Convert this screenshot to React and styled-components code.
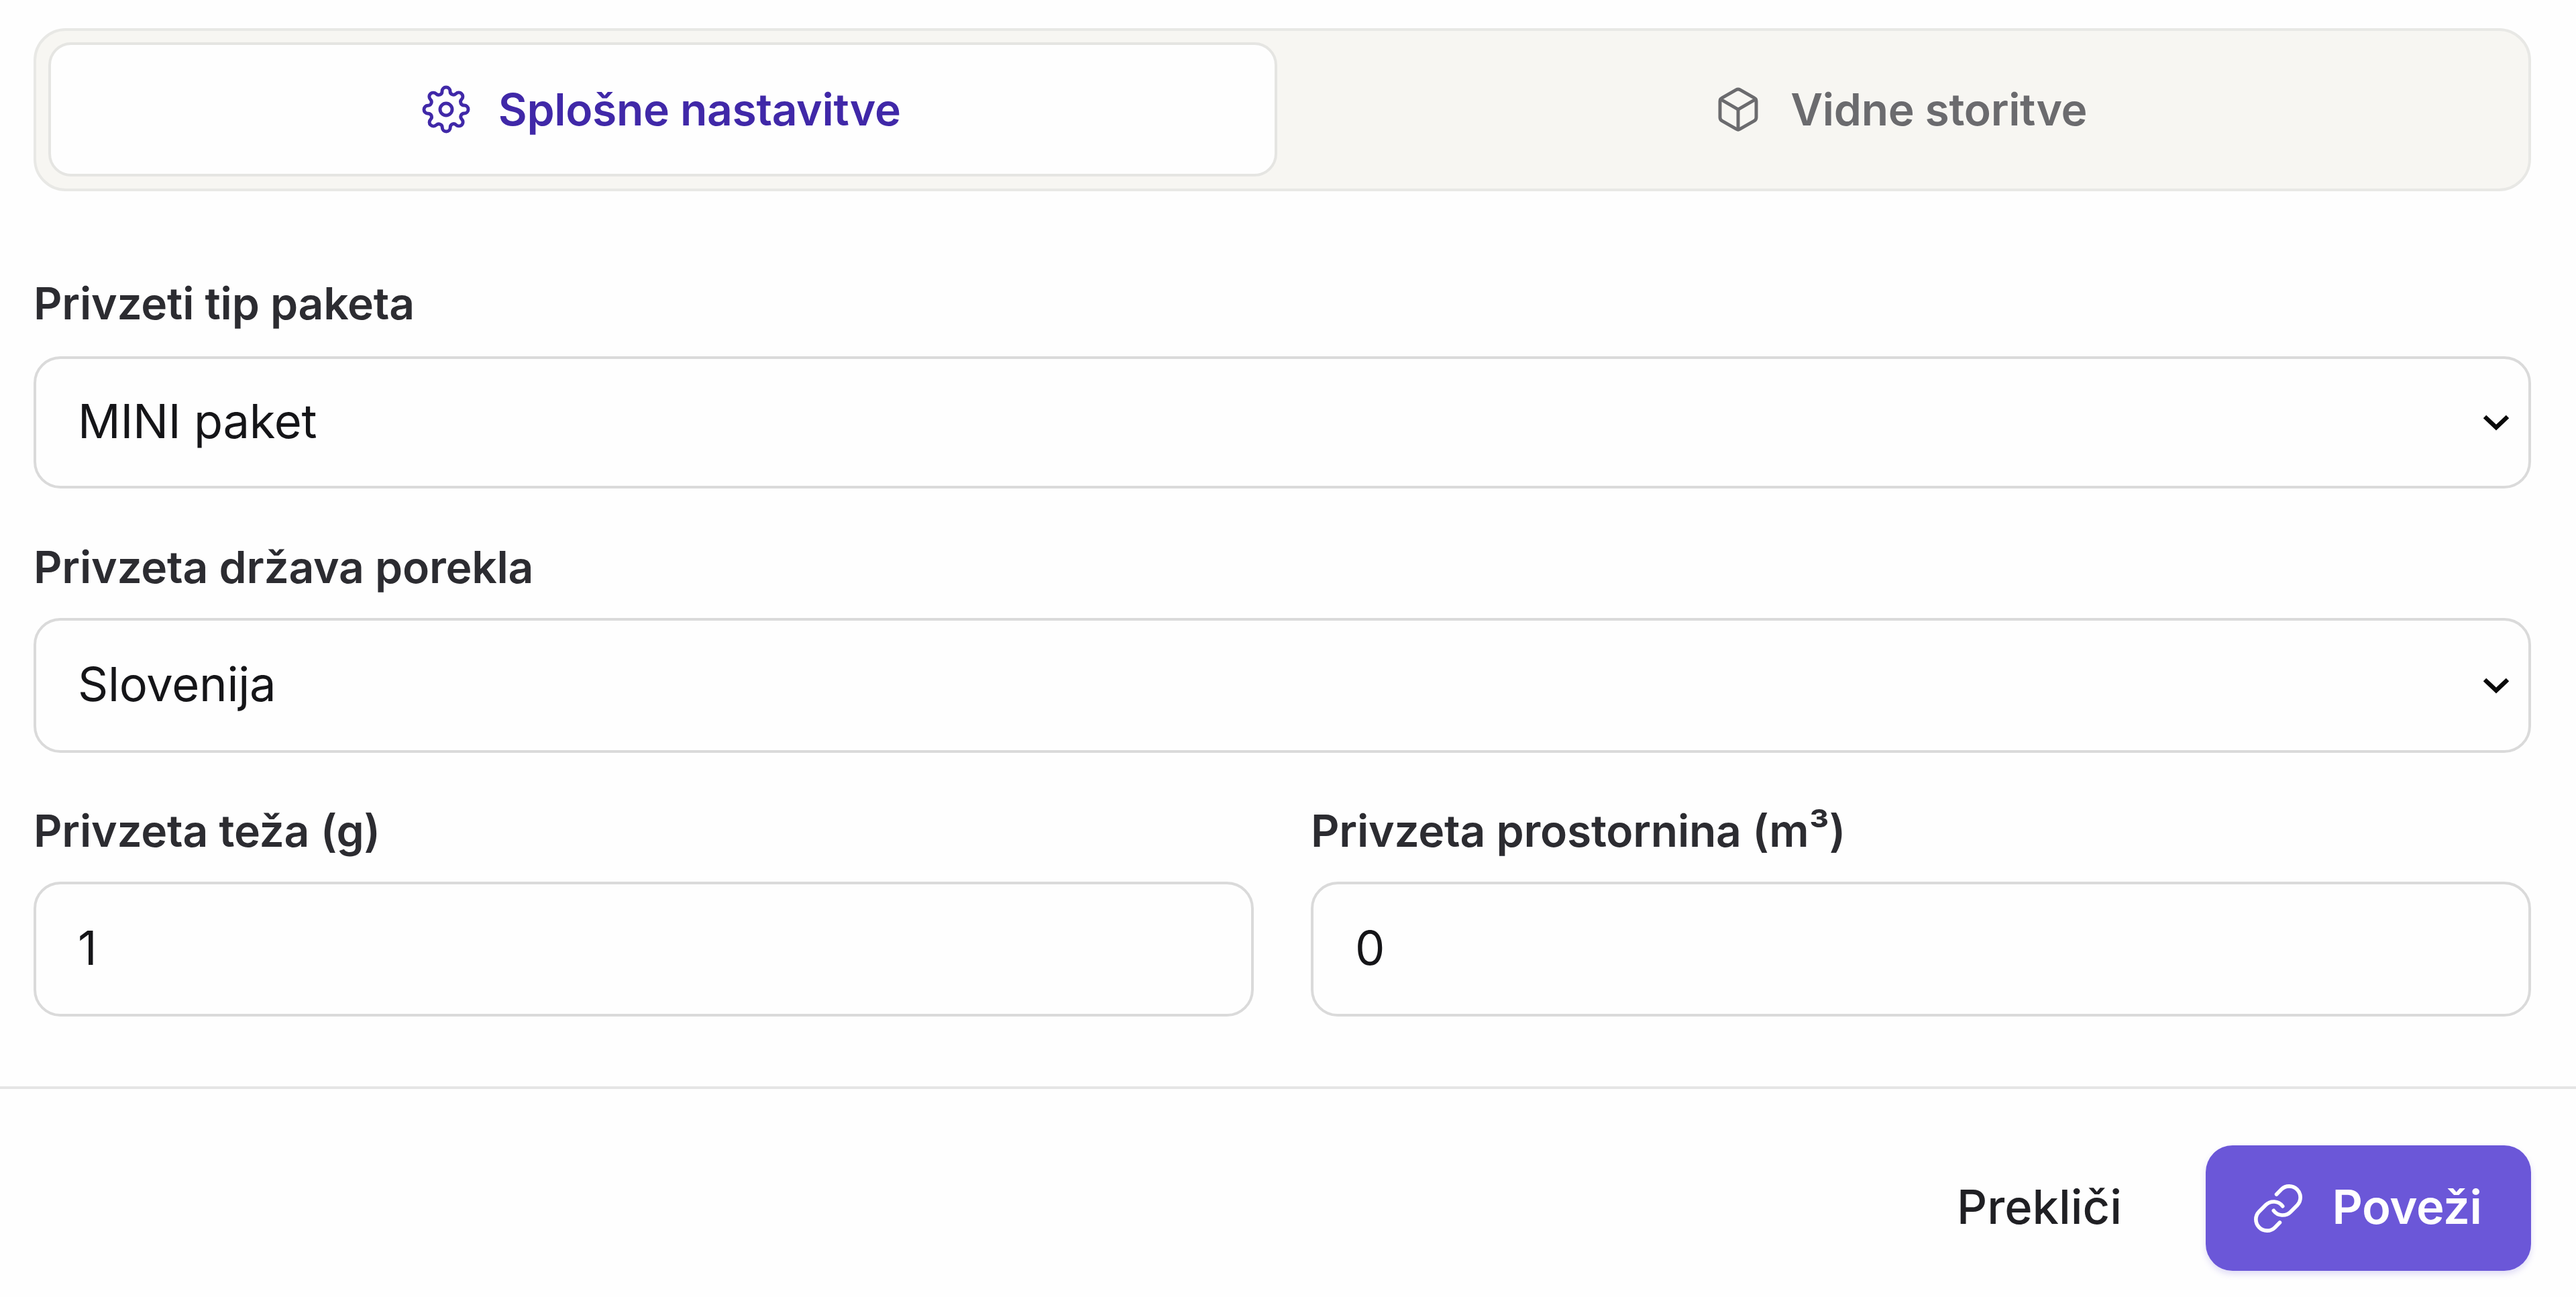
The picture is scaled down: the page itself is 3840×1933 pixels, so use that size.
import React, { useState } from "react"
import styled, { createGlobalStyle } from 'styled-components'
import { FiSettings, FiBox } from 'react-icons/fi'

const GlobalStyle = createGlobalStyle`
    * {
        box-sizing: border-box;
    }

    body {
        margin: 0;
        background: #fefefe;
        font-family: Inter, sans-serif;
    }
`

const Wrapper = styled.div`
    display: flex;
    flex-direction: column;
    width: 100vw;
    height: 100vh;
`

// tabs
const Tabs = styled.div`
    display: flex;
    gap: 16px;
    height: 243px;
    margin: 42px 67px 0 50px;
    padding: 17px 18px 18px;
    border: 4px solid #e8e8e5;
    border-radius: 48px;
    background: #f7f6f2;
`

const Tab = styled.button`
    flex: 1;
    display: flex;
    align-items: center;
    justify-content: center;
    gap: 42px;
    padding: 0 4px 0 0;
    border: 4px solid ${props => props.$active ? '#e5e5e2' : 'transparent'};
    border-radius: 34px;
    background: ${props => props.$active ? '#fefefe' : 'transparent'};
    color: ${props => props.$active ? '#4028a8' : '#6b6b6e'};
    font-family: inherit;
    font-size: 66px;
    font-weight: 600;
    letter-spacing: -0.35px;

    svg {
        width: 72px;
        height: 72px;
        stroke-width: 1.65;
    }
`

// form
const Form = styled.div`
    display: flex;
    flex-direction: column;
    flex: 1;
    padding: 127px 67px 0 50px;
`

const Row = styled.div`
    display: flex;
    gap: 85px;
`

const Field = styled.div`
    width: 100%;
    height: 393px;
`

const Label = styled.label`
    display: block;
    height: 116px;
    line-height: 80px;
    color: #2c2c31;
    font-size: 66px;
    font-weight: 600;
    letter-spacing: -0.25px;
`

const Control = styled.div`
    display: flex;
    align-items: center;
    justify-content: space-between;
    height: ${props => props.$first ? '197px' : '201px'};
    margin-top: ${props => props.$first ? '3px' : '0'};
    padding: 0 26px 0 62px;
    border: 4px solid #dadada;
    border-radius: 40px;
    color: #151518;
    font-size: 70.5px;
    letter-spacing: -0.3px;
`

const Value = styled.span`
    padding-bottom: 4px;
`

// footer
const Footer = styled.div`
    display: flex;
    align-items: flex-start;
    justify-content: flex-end;
    gap: 125px;
    height: 314px;
    padding: 84px 67px 0;
    border-top: 4px solid #e5e5e5;
`

const Button = styled.button`
    display: flex;
    align-items: center;
    justify-content: center;
    height: 187px;
    padding: 0 0 4px;
    border: none;
    background: none;
    color: #202024;
    font-family: inherit;
    font-size: 70.5px;
    font-weight: 450;
`

const ConnectButton = styled(Button)`
    gap: 40px;
    width: 485px;
    padding-right: 5px;
    border-radius: 40px;
    background: #6b57d8;
    box-shadow: 0 5px 10px rgba(107, 87, 216, 0.2);
    color: #fefefe;
    font-weight: 600;
    letter-spacing: -0.4px;

    svg {
        margin-top: 4px;
    }
`

function ChevronIcon(){
    return (
        <svg width="44" height="32" viewBox="0 0 44 32" fill="none" stroke="#0a0a0a" strokeWidth="6.5">
            <path d="M5 7l17 16L39 7" />
        </svg>
    )
}

function LinkIcon(){
    return (
        <svg width="80" height="80" viewBox="0 0 24 24" fill="none" stroke="currentColor" strokeWidth="1.7" strokeLinecap="round">
            <path d="M10 13a5 5 0 0 0 7.54.54l3-3a5 5 0 0 0-7.07-7.07l-2.2 2.2" />
            <path d="M14 11a5 5 0 0 0-7.54-.54l-3 3a5 5 0 0 0 7.07 7.07l2.2-2.2" />
        </svg>
    )
}

export default function App(){
    const [tab, setTab] = useState('general')

    return (
        <Wrapper>
            <GlobalStyle />
            <Tabs>
                <Tab $active={tab === 'general'} onClick={() => setTab('general')}>
                    <FiSettings />
                    Splošne nastavitve
                </Tab>
                <Tab $active={tab === 'services'} onClick={() => setTab('services')}>
                    <FiBox />
                    Vidne storitve
                </Tab>
            </Tabs>

            <Form>
                <Field>
                    <Label>Privzeti tip paketa</Label>
                    <Control $first><Value>MINI paket</Value><ChevronIcon /></Control>
                </Field>
                <Field>
                    <Label>Privzeta država porekla</Label>
                    <Control><Value>Slovenija</Value><ChevronIcon /></Control>
                </Field>
                <Row>
                    <Field>
                        <Label>Privzeta teža (g)</Label>
                        <Control><Value>1</Value></Control>
                    </Field>
                    <Field>
                        <Label>Privzeta prostornina (m³)</Label>
                        <Control><Value>0</Value></Control>
                    </Field>
                </Row>
            </Form>

            <Footer>
                <Button>Prekliči</Button>
                <ConnectButton>
                    <LinkIcon />
                    Poveži
                </ConnectButton>
            </Footer>
        </Wrapper>
    );
}
